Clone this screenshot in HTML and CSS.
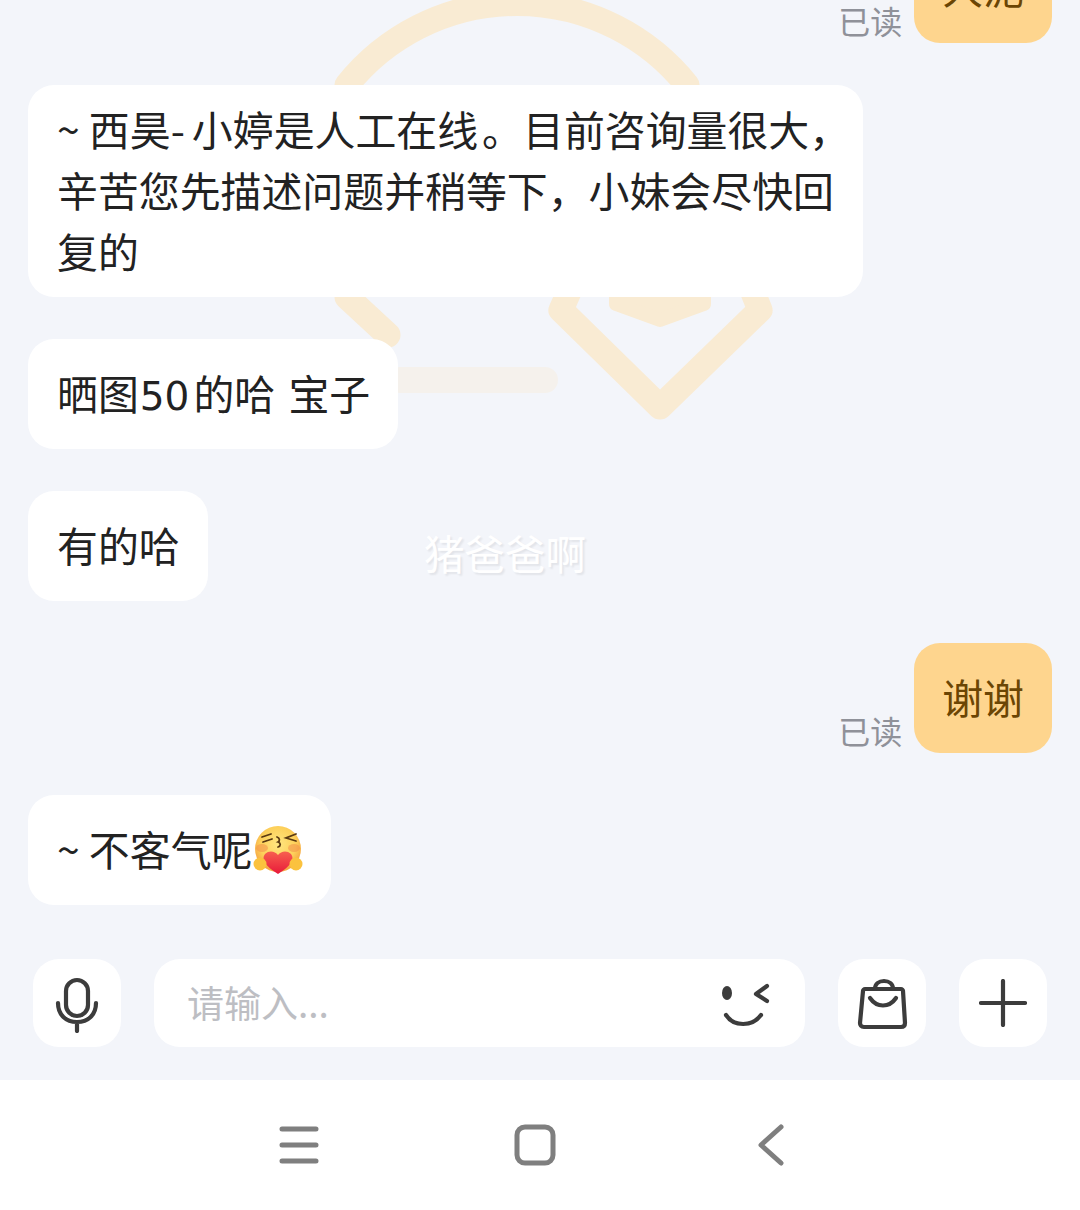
FILE: index.html
```html
<!DOCTYPE html>
<html lang="zh-CN">

<head>
    <meta charset="UTF-8">
    <meta name="viewport" content="width=device-width, initial-scale=1.0">
    <title>聊天</title>
    <link rel="stylesheet" href="styles.css">
</head>

<body>
    <div class="screen">
        <main class="chat">
            <!-- faded shop logo behind the messages -->
            <svg class="chat-logo" width="500" height="430" viewBox="0 0 500 430" fill="none">
                <path class="logo-line" d="M47 85A218 218 0 0 1 387 85"/>
                <path class="logo-line" d="M47 297L88 335"/>
                <path class="logo-bar" d="M100 380H245"/>
                <path class="logo-line" d="M272 285L261 310L360 407L460 310L450 285"/>
                <path class="logo-blob" d="M316 297H404V304L360 320L316 304Z"/>
            </svg>

            <div class="messages">
                <div class="row row-me">
                    <span class="read">已读</span>
                    <div class="bubble bubble-me">大泥</div>
                </div>
                <div class="row">
                    <div class="bubble bubble-wide">~ 西昊<span class="dash">-</span>小婷是人工在线<span class="stop">。</span>目前咨询量很大，<br>辛苦您先描述问题并稍等下，小妹会尽快回<br>复的</div>
                </div>
                <div class="row">
                    <div class="bubble bubble-spaced"><span>晒图<span class="num">50</span>的哈 宝子</span></div>
                </div>
                <div class="row">
                    <div class="bubble">有的哈</div>
                </div>
                <div class="row row-me">
                    <span class="read">已读</span>
                    <div class="bubble bubble-me">谢谢</div>
                </div>
                <div class="row">
                    <div class="bubble">~ 不客气呢
                        <svg class="emoji" width="50" height="50" viewBox="0 0 50 50">
                            <defs>
                                <radialGradient id="faceFill" cx="50%" cy="40%" r="55%">
                                    <stop offset="0" stop-color="#ffe680"/>
                                    <stop offset="0.7" stop-color="#fdd05a"/>
                                    <stop offset="1" stop-color="#f6a945"/>
                                </radialGradient>
                                <linearGradient id="heartFill" x1="0" y1="0" x2="0" y2="1">
                                    <stop offset="0" stop-color="#f7604f"/>
                                    <stop offset="1" stop-color="#e8193a"/>
                                </linearGradient>
                            </defs>
                            <circle cx="25" cy="23" r="23" fill="url(#faceFill)"/>
                            <ellipse cx="9" cy="22" rx="6" ry="4" fill="#f28a4a" opacity="0.5"/>
                            <ellipse cx="41" cy="22" rx="6" ry="4" fill="#f28a4a" opacity="0.5"/>
                            <path d="M9 11L18 8M10 16L19 13M43 8L33 12L43 15" fill="none" stroke="#5b3a12" stroke-width="1.8" stroke-linecap="round"/>
                            <path d="M24 11C27 12 27 15 25 16C28 17 28 20 25 21" fill="none" stroke="#5b3a12" stroke-width="1.8" stroke-linecap="round"/>
                            <path d="M25 48C12 40 8 33 12 28C16 24 22 25 25 29C28 25 34 24 38 28C42 33 38 40 25 48Z" fill="url(#heartFill)"/>
                            <circle cx="7" cy="38" r="6.5" fill="#fbc23e"/>
                            <circle cx="43" cy="38" r="6.5" fill="#fbc23e"/>
                        </svg>
                    </div>
                </div>
            </div>

            <div class="watermark">猪爸爸啊</div>

            <div class="composer">
                <button class="tile">
                    <svg width="48" height="56" viewBox="0 0 48 56" fill="none" class="icon icon-mic">
                        <rect x="13" y="3" width="22" height="36" rx="11"/>
                        <path d="M5 26C5 38 13 45 24 45C35 45 43 38 43 26M24 45V54"/>
                    </svg>
                </button>
                <div class="input">
                    <span class="placeholder">请输入...</span>
                    <svg width="50" height="50" viewBox="0 0 50 50" fill="none" class="icon">
                        <ellipse cx="7" cy="15" rx="5" ry="7" class="icon-fill"/>
                        <path d="M47 8L36 16L47 23"/>
                        <path d="M6 37C14 49 32 49 41 37"/>
                    </svg>
                </div>
                <button class="tile">
                    <svg width="54" height="54" viewBox="0 0 54 54" fill="none" class="icon">
                        <path d="M10 13H46C47 13 48 14 48 15L50 47C50 49 49 51 46 51H9C6 51 5 49 5 47L8 15C8 14 9 13 10 13Z"/>
                        <path d="M20 13C20 8 24 5 29 5C34 5 38 8 38 13"/>
                        <path d="M15 22C22 32 34 32 41 22"/>
                    </svg>
                </button>
                <button class="tile">
                    <svg width="48" height="48" viewBox="0 0 48 48" fill="none" class="icon">
                        <path d="M24 2V46M2 24H46"/>
                    </svg>
                </button>
            </div>
        </main>

        <nav class="navbar">
            <svg width="40" height="38" viewBox="0 0 40 38" fill="none" class="nav-icon">
                <path d="M3 3H37M3 19H37M3 35H37"/>
            </svg>
            <svg width="42" height="42" viewBox="0 0 42 42" fill="none" class="nav-icon">
                <rect x="3" y="3" width="36" height="36" rx="8"/>
            </svg>
            <svg width="28" height="42" viewBox="0 0 28 42" fill="none" class="nav-icon nav-back">
                <path d="M25 3L5 21L25 39"/>
            </svg>
        </nav>
    </div>
</body>

</html>
```

FILE: styles.css
```css
* {
    box-sizing: border-box;
}

body {
    margin: 0;
    font-family: "Noto Sans CJK SC", sans-serif;
}

.screen {
    width: 1080px;
    height: 1210px;
    display: flex;
    flex-direction: column;
    overflow: hidden;
}

.chat {
    position: relative;
    height: 1080px;
    display: flex;
    flex-direction: column;
    justify-content: space-between;
    background-color: #f3f5fa;
    overflow: hidden;
}

.chat-logo {
    position: absolute;
    left: 300px;
    top: 0;
}

.logo-line {
    stroke: #f9ebd3;
    stroke-width: 25;
    stroke-linecap: round;
    stroke-linejoin: round;
}

.logo-bar {
    stroke: #f5f1ec;
    stroke-width: 26;
    stroke-linecap: round;
}

.logo-blob {
    fill: #f9ebd3;
    stroke: #f9ebd3;
    stroke-width: 14;
    stroke-linejoin: round;
}

.messages {
    position: relative;
    display: flex;
    flex-direction: column;
    gap: 42px;
    margin-top: -67px;
    padding: 0 28px;
}

.row {
    display: flex;
    align-items: flex-end;
}

.row-me {
    justify-content: flex-end;
    gap: 12px;
}

.bubble {
    display: flex;
    align-items: center;
    min-height: 110px;
    padding: 12.5px 28px 16.5px 29px;
    border-radius: 26px;
    background-color: #fff;
    color: #222;
    font-size: 40.9px;
    line-height: 61px;
}

.bubble-wide {
    display: block;
    width: 835px;
    white-space: nowrap;
}

.bubble-spaced {
    word-spacing: 4px;
}

.bubble-me {
    padding-left: 28px;
    background-color: #fed58e;
    color: #6b4504;
}

.dash {
    margin: 0 7px 0 0;
}

.stop {
    margin-left: 4px;
}

.num {
    margin: 0 4px 0 1px;
    font-family: "DejaVu Sans", sans-serif;
    font-size: 39px;
    line-height: 0;
}

.read {
    margin-bottom: -2px;
    color: #8f9199;
    font-size: 32px;
    line-height: 50px;
}

.emoji {
    margin: 5px 0 0 1px;
}

.watermark {
    position: absolute;
    left: 424px;
    top: 524px;
    color: #fff;
    font-size: 40.5px;
    line-height: 58px;
    text-shadow: 2px 2px 2px rgba(0, 0, 0, 0.07);
}

.composer {
    position: relative;
    display: flex;
    gap: 33px;
    padding: 0 33px 33px;
}

.tile {
    width: 88px;
    height: 88px;
    display: flex;
    align-items: center;
    justify-content: center;
    padding: 0;
    border: none;
    border-radius: 26px;
    background-color: #fff;
}

.input {
    flex: 1;
    height: 88px;
    display: flex;
    align-items: center;
    justify-content: space-between;
    padding: 0 35px 0 33px;
    border-radius: 26px;
    background-color: #fff;
}

.placeholder {
    margin-bottom: 2px;
    color: #bdbec3;
    font-size: 37px;
}

.icon path,
.icon rect {
    stroke: #3c3c3c;
    stroke-width: 4.2;
    stroke-linecap: round;
    stroke-linejoin: round;
}

.icon-mic {
    margin-top: 4px;
}

.icon-fill {
    fill: #3c3c3c;
}

.navbar {
    height: 130px;
    display: flex;
    align-items: center;
    gap: 195px;
    padding-left: 279px;
    background-color: #fff;
}

.nav-back {
    margin-left: 5px;
}

.nav-icon path,
.nav-icon rect {
    stroke: #7f7f7f;
    stroke-width: 5;
    stroke-linecap: round;
    stroke-linejoin: round;
}
```
